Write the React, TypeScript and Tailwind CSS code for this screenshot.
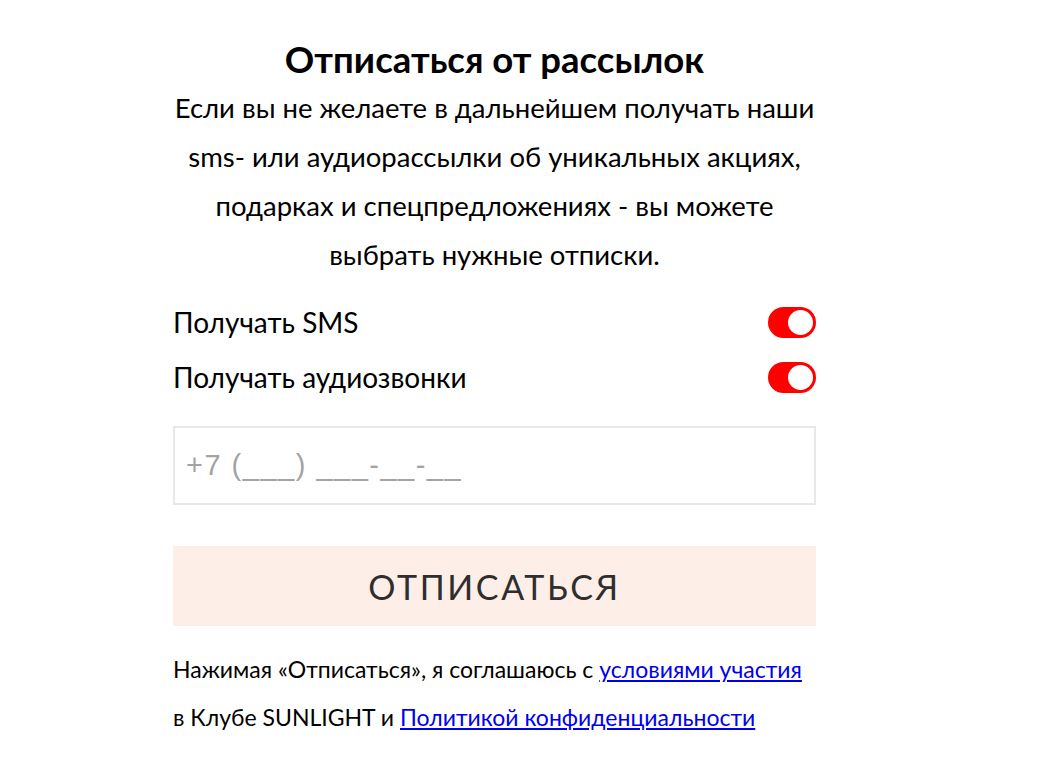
import { useState } from "react";

function Toggle({ on, onClick }: { on: boolean; onClick: () => void }) {
  return (
    <button
      type="button"
      onClick={onClick}
      className={`flex h-[31px] w-12 items-center rounded-full px-[3px] ${
        on ? "justify-end bg-[#ff0000]" : "justify-start bg-[#d4d4d4]"
      }`}
    >
      <span className="block h-[25px] w-[25px] rounded-full bg-white" />
    </button>
  );
}

export default function App() {
  const [sms, setSms] = useState(true);
  const [audio, setAudio] = useState(true);
  const [phone, setPhone] = useState("");

  return (
    <main className="min-h-screen bg-white font-['Lato',sans-serif] text-black">
      <section className="ml-[173px] w-[643px] pt-[36px]">
        <h1 className="text-center text-[36.5px] font-bold leading-[47px]">
          Отписаться от рассылок
        </h1>
        <p className="whitespace-nowrap text-center text-[27.5px] leading-[49px]">
          Если вы не желаете в дальнейшем получать наши
          <br />
          sms- или аудиорассылки об уникальных акциях,
          <br />
          подарках и спецпредложениях - вы можете
          <br />
          выбрать нужные отписки.
        </p>

        <div className="mt-[28px] flex flex-col gap-[24px]">
          <div className="flex items-center justify-between">
            <span className="text-[28px] leading-[31px]">Получать SMS</span>
            <Toggle on={sms} onClick={() => setSms(!sms)} />
          </div>
          <div className="flex items-center justify-between">
            <span className="text-[28px] leading-[31px]">Получать аудиозвонки</span>
            <Toggle on={audio} onClick={() => setAudio(!audio)} />
          </div>
        </div>

        <input
          type="tel"
          value={phone}
          onChange={(event) => setPhone(event.target.value)}
          placeholder="+7 (___) ___-__-__"
          className="mt-[33px] block h-[79px] w-full border-2 border-[#e8e8e8] px-[11px] font-['Liberation_Sans',sans-serif] text-[29px] tracking-[1.5px] outline-none placeholder:text-[#a3a3a3]"
        />

        <button
          type="button"
          className="mt-[41px] block h-[80px] w-full bg-[#fdeee7] text-[34px] tracking-[2.6px] text-[#2e2e2e]"
        >
          ОТПИСАТЬСЯ
        </button>

        <p className="mt-[19px] whitespace-nowrap text-[23px] leading-[48px]">
          Нажимая «Отписаться», я соглашаюсь с{" "}
          <a href="#" className="text-[#0000ee] underline">
            условиями участия
          </a>
          <br />в Клубе SUNLIGHT и{" "}
          <a href="#" className="text-[#0000ee] underline">
            Политикой конфиденциальности
          </a>
        </p>
      </section>
    </main>
  );
}
